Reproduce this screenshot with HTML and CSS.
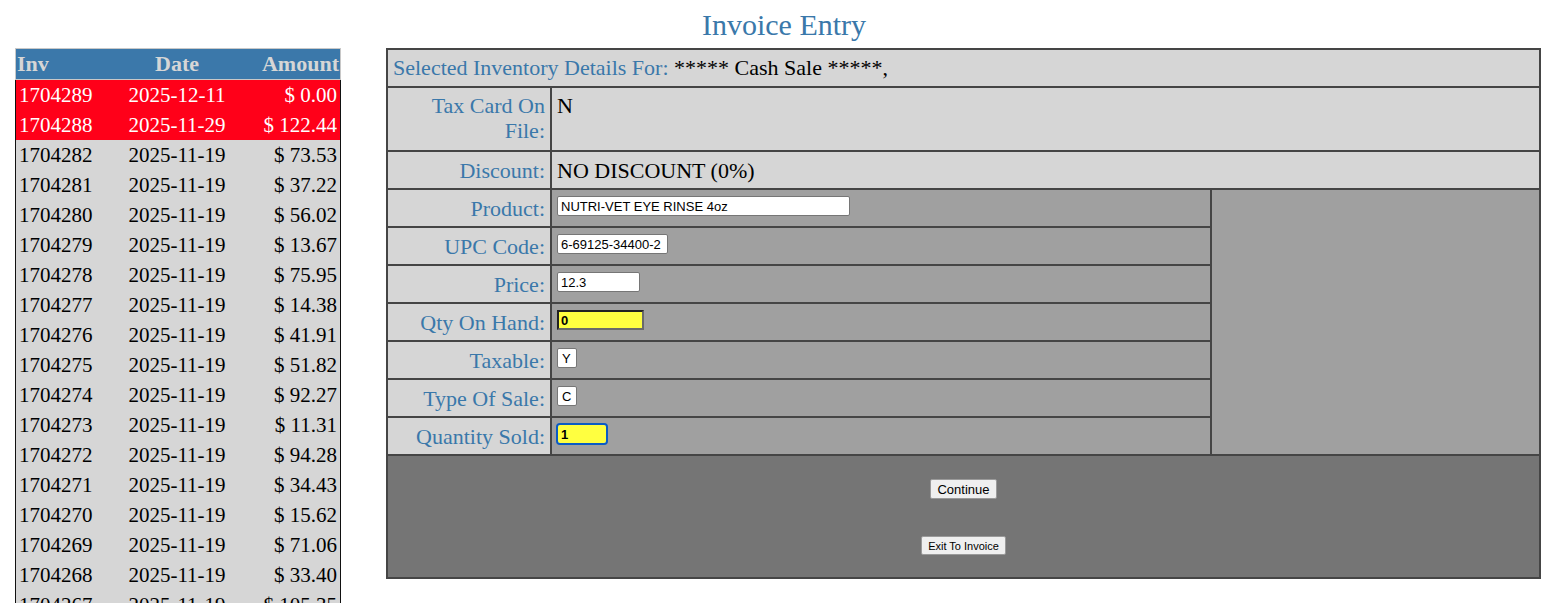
FILE: index.html
```html
<!DOCTYPE html>
<html>
<head>
<meta charset="utf-8">
<title>Invoice Entry</title>
<link rel="stylesheet" href="styles.css">
</head>
<body>
<h1 class="title">Invoice Entry</h1>
<div class="layout">
  <div class="inv-list">
    <table class="inv-table">
      <thead>
        <tr><th class="c-inv">Inv</th><th class="c-date">Date</th><th class="c-amt">Amount</th></tr>
      </thead>
      <tbody>
        <tr class="open"><td class="c-inv">1704289</td><td class="c-date">2025-12-11</td><td class="c-amt">$ 0.00</td></tr>
        <tr class="open"><td class="c-inv">1704288</td><td class="c-date">2025-11-29</td><td class="c-amt">$ 122.44</td></tr>
        <tr><td class="c-inv">1704282</td><td class="c-date">2025-11-19</td><td class="c-amt">$ 73.53</td></tr>
        <tr><td class="c-inv">1704281</td><td class="c-date">2025-11-19</td><td class="c-amt">$ 37.22</td></tr>
        <tr><td class="c-inv">1704280</td><td class="c-date">2025-11-19</td><td class="c-amt">$ 56.02</td></tr>
        <tr><td class="c-inv">1704279</td><td class="c-date">2025-11-19</td><td class="c-amt">$ 13.67</td></tr>
        <tr><td class="c-inv">1704278</td><td class="c-date">2025-11-19</td><td class="c-amt">$ 75.95</td></tr>
        <tr><td class="c-inv">1704277</td><td class="c-date">2025-11-19</td><td class="c-amt">$ 14.38</td></tr>
        <tr><td class="c-inv">1704276</td><td class="c-date">2025-11-19</td><td class="c-amt">$ 41.91</td></tr>
        <tr><td class="c-inv">1704275</td><td class="c-date">2025-11-19</td><td class="c-amt">$ 51.82</td></tr>
        <tr><td class="c-inv">1704274</td><td class="c-date">2025-11-19</td><td class="c-amt">$ 92.27</td></tr>
        <tr><td class="c-inv">1704273</td><td class="c-date">2025-11-19</td><td class="c-amt">$ 11.31</td></tr>
        <tr><td class="c-inv">1704272</td><td class="c-date">2025-11-19</td><td class="c-amt">$ 94.28</td></tr>
        <tr><td class="c-inv">1704271</td><td class="c-date">2025-11-19</td><td class="c-amt">$ 34.43</td></tr>
        <tr><td class="c-inv">1704270</td><td class="c-date">2025-11-19</td><td class="c-amt">$ 15.62</td></tr>
        <tr><td class="c-inv">1704269</td><td class="c-date">2025-11-19</td><td class="c-amt">$ 71.06</td></tr>
        <tr><td class="c-inv">1704268</td><td class="c-date">2025-11-19</td><td class="c-amt">$ 33.40</td></tr>
        <tr><td class="c-inv">1704267</td><td class="c-date">2025-11-19</td><td class="c-amt">$ 105.35</td></tr>
        <tr><td class="c-inv">1704266</td><td class="c-date">2025-11-19</td><td class="c-amt">$ 48.10</td></tr>
      </tbody>
    </table>
  </div>

  <table class="detail">
    <colgroup>
      <col class="col-label">
      <col class="col-value">
      <col class="col-side">
    </colgroup>
    <tr class="head-row">
      <td colspan="3"><span class="lbl">Selected Inventory Details For:</span> ***** Cash Sale *****,</td>
    </tr>
    <tr class="info-row tall">
      <td class="label">Tax Card On File:</td>
      <td class="info" colspan="2">N</td>
    </tr>
    <tr class="info-row short">
      <td class="label">Discount:</td>
      <td class="info" colspan="2">NO DISCOUNT (0%)</td>
    </tr>
    <tr class="field-row">
      <td class="label">Product:</td>
      <td class="value"><input class="inp w-product" type="text" value="NUTRI-VET EYE RINSE 4oz"></td>
      <td class="side" rowspan="7"></td>
    </tr>
    <tr class="field-row">
      <td class="label">UPC Code:</td>
      <td class="value"><input class="inp w-upc" type="text" value="6-69125-34400-2"></td>
    </tr>
    <tr class="field-row">
      <td class="label">Price:</td>
      <td class="value"><input class="inp w-price" type="text" value="12.3"></td>
    </tr>
    <tr class="field-row">
      <td class="label">Qty On Hand:</td>
      <td class="value"><input class="inp w-qoh hl" type="text" value="0"></td>
    </tr>
    <tr class="field-row">
      <td class="label">Taxable:</td>
      <td class="value"><input class="inp w-one" type="text" value="Y"></td>
    </tr>
    <tr class="field-row">
      <td class="label">Type Of Sale:</td>
      <td class="value"><input class="inp w-one" type="text" value="C"></td>
    </tr>
    <tr class="field-row">
      <td class="label">Quantity Sold:</td>
      <td class="value"><input class="inp w-qty sel" type="text" value="1"></td>
    </tr>
    <tr class="action-row">
      <td colspan="3">
        <div class="actions">
          <button class="btn">Continue</button>
          <button class="btn btn-small">Exit To Invoice</button>
        </div>
      </td>
    </tr>
  </table>
</div>
</body>
</html>
```
FILE: styles.css
```css
html, body {
  margin: 0;
  padding: 0;
  background: #ffffff;
}
body {
  font-family: "Liberation Serif", "Times New Roman", serif;
  color: #000;
}
.title {
  margin: 0;
  height: 48px;
  padding-top: 6px;
  box-sizing: border-box;
  text-align: center;
  font-size: 30px;
  font-weight: normal;
  line-height: 38px;
  color: #3a78aa;
  padding-left: 12px;
}
.layout {
  display: flex;
  align-items: flex-start;
  gap: 45px;
  padding-left: 15px;
}
.inv-list {
  width: 326px;
  flex: none;
}
.inv-table {
  width: 326px;
  border-collapse: collapse;
  font-size: 21px;
  border-left: 1px solid #111;
  border-right: 1px solid #111;
}
.inv-table th {
  background: #3b78aa;
  color: #d6d6d6;
  font-weight: bold;
  font-size: 22px;
  height: 30px;
  padding: 0 1px;
  line-height: 28px;
  border-top: 1px solid #c8c8c8;
  border-bottom: 1px solid #c8c8c8;
}
.inv-table thead tr th:first-child { border-left: 1px solid #c8c8c8; }
.inv-table thead tr th:last-child { border-right: 1px solid #c8c8c8; }
.inv-table td {
  background: #d6d6d6;
  height: 30px;
  padding: 0 3px;
  line-height: 30px;
  white-space: nowrap;
}
.inv-table tr.open td {
  background: #ff0019;
  color: #ffffff;
}
.c-inv { text-align: left; width: 88px; }
.c-date { text-align: center; }
.c-amt { text-align: right; width: 90px; }

.detail {
  width: 1155px;
  flex: none;
  table-layout: fixed;
  border-collapse: collapse;
  border: 2px solid #2e2e2e;
  font-size: 22px;
}
.col-label { width: 164px; }
.col-side { width: 329px; }
.detail td {
  border: 2px solid #454545;
  padding: 0 5px;
}
.head-row td {
  background: #d6d6d6;
  height: 36px;
  padding-left: 5px;
}
.lbl { color: #3a78aa; }
.label {
  background: #d6d6d6;
  color: #3a78aa;
  text-align: right;
  vertical-align: middle;
  line-height: 25px;
}
.info-row .label { vertical-align: top; padding-top: 5px; padding-bottom: 5px; }
.info-row.tall .label { padding-bottom: 7px; }
.info-row.short .label { padding-top: 6px; }
.info-row .info {
  background: #d6d6d6;
  vertical-align: top;
  padding-top: 5px;
  line-height: 25px;
}
.info-row.short .info { padding-top: 6px; }
.field-row td { height: 36px; }
.value {
  background: #a0a0a0;
  vertical-align: middle;
}
.side {
  background: #a0a0a0;
}
.inp {
  font-family: "Liberation Sans", Arial, sans-serif;
  font-size: 13px;
  height: 20px;
  box-sizing: border-box;
  border: 1px solid #767676;
  border-radius: 2px;
  background: #ffffff;
  padding: 1px 3px;
  color: #000;
  display: block;
  margin-top: -4px;
}
.w-product { width: 293px; }
.w-upc { width: 111px; }
.w-price { width: 83px; }
.w-qoh { width: 87px; }
.w-one { width: 20px; padding: 1px 4px; }
.w-qty { width: 50px; }
.hl {
  background: #ffff40;
  border: 2px solid;
  border-color: #222 #6a6a6a #6a6a6a #222;
  border-radius: 0;
  font-weight: bold;
  padding: 0 2px;
}
.sel {
  background: #ffff40;
  outline: 2px solid #0a5bc4;
  outline-offset: -1px;
  border: 1px solid #ffffff;
  border-radius: 3px;
  font-weight: bold;
}
.action-row td {
  background: #757575;
  height: 121px;
  padding: 0;
  vertical-align: top;
}
.actions {
  display: flex;
  flex-direction: column;
  align-items: center;
  gap: 37px;
  padding-top: 23px;
}
.btn {
  font-family: "Liberation Sans", Arial, sans-serif;
  font-size: 13px;
  height: 20px;
  padding: 0 6px;
  background: #efefef;
  border: 1px solid #9a9a9a;
  border-radius: 2px;
  color: #000;
}
.btn-small {
  font-size: 11px;
  height: 19px;
  padding: 0 6px;
}
```
